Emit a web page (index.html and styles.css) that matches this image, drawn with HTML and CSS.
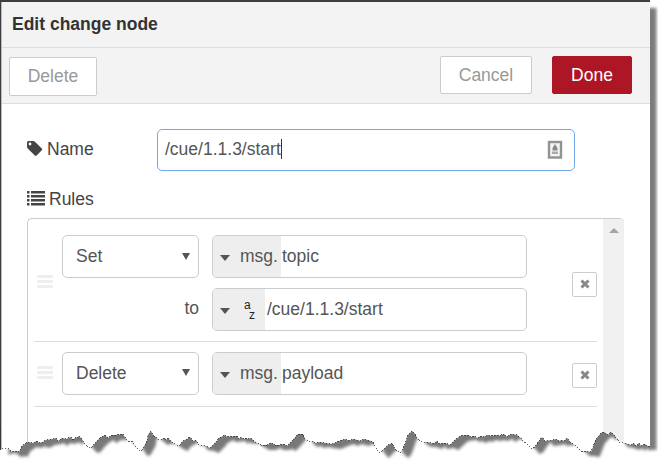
FILE: index.html
```
<!DOCTYPE html>
<html lang="en">
<head>
<meta charset="utf-8">
<title>Edit change node</title>
<link rel="stylesheet" href="styles.css">
</head>
<body>
<main class="sheet">
  <header class="title">Edit change node</header>
  <div class="toolbar">
    <button class="btn btn-delete">Delete</button>
    <button class="btn btn-cancel">Cancel</button>
    <button class="btn btn-done">Done</button>
  </div>
  <div class="form">
    <div class="name-row">
      <div class="label">
        <svg class="tag" width="16" height="16" viewBox="0 0 16 16"><path fill-rule="evenodd" d="M0 1.5Q0 0 1.5 0H6Q7.3 0 8.2 .9L14.8 7.5Q15.6 8.4 14.8 9.3L9.6 14.6Q8.7 15.4 7.8 14.6L1 7.8Q0 6.8 0 5.5ZM3 1.6A1.4 1.4 0 1 0 3 4.4A1.4 1.4 0 1 0 3 1.6Z"/></svg>
        <span>Name</span>
      </div>
      <div class="name-input">
        <span class="caret">/cue/1.1.3/start</span>
        <svg class="autofill" width="16" height="20" viewBox="0 0 16 20"><rect x="2" y="2" width="12" height="15.5" fill="#f4f4f4" stroke="#929292" stroke-width="2.4"/><path d="M8 4L10.5 8V10.500H5.500V8Z" fill="#888"/><path d="M5 11.500H11V14H5Z" fill="#aaa"/></svg>
      </div>
    </div>
    <div class="label rules-label">
      <svg width="18" height="15" viewBox="0 0 18 15"><path d="M0 0h2.500v2.500H0zM4 0h14v2.500H4zM0 4h2.500v2.500H0zM4 4h14v2.500H4zM0 8h2.500v2.500H0zM4 8h14v2.500H4zM0 12h2.500v2.500H0zM4 12h14v2.500H4z"/></svg>
      <span>Rules</span>
    </div>
    <div class="list">
      <div class="rules">
        <div class="rule rule-set">
          <div class="grip"><i></i><i></i><i></i></div>
          <div class="fields">
            <div class="select"><span>Set</span><i class="arrow"></i></div>
            <div class="typed"><div class="type"><i class="drop"></i><span>msg.</span></div><span class="value">topic</span></div>
            <div class="to">to</div>
            <div class="typed"><div class="type type-string"><i class="drop"></i><span class="az"><span>a</span><span>z</span></span></div><span class="value">/cue/1.1.3/start</span></div>
          </div>
          <button class="remove"><svg width="10" height="10" viewBox="0 0 10 10"><path d="M1.500 1.500L8.500 8.500M8.500 1.500L1.500 8.500"/></svg></button>
        </div>
        <div class="rule rule-delete">
          <div class="grip"><i></i><i></i><i></i></div>
          <div class="fields">
            <div class="select"><span>Delete</span><i class="arrow"></i></div>
            <div class="typed"><div class="type"><i class="drop"></i><span>msg.</span></div><span class="value">payload</span></div>
          </div>
          <button class="remove"><svg width="10" height="10" viewBox="0 0 10 10"><path d="M1.500 1.500L8.500 8.500M8.500 1.500L1.500 8.500"/></svg></button>
        </div>
      </div>
      <div class="scrollbar"><i></i></div>
    </div>
  </div>
</main>
<svg class="torn" width="658" height="463" viewBox="0 0 658 463">
  <defs>
    <path id="sheet" d="M650 446V0H0V450L5 448L9 449L12 452L17 451L19 452L22 446L28 442L33 443L37 441L39 443L43 442L46 440L53 439L56 438L58 441L62 438L66 439L71 437L72 439L74 439L76 437L77 438L79 436L82 439L84 443L89 448L92 447L96 442L100 438L105 435L108 438L112 435L117 435L123 434L126 439L128 441L133 442L139 451L142 450L147 441L148 435L151 431L153 435L157 438L159 440L162 439L165 438L166 440L168 438L173 443L179 446L183 441L187 439L190 437L193 441L196 440L199 445L206 446L210 448L213 445L217 441L219 438L225 435L227 437L237 436L239 439L241 437L244 439L246 438L248 439L251 438L254 441L257 443L261 445L267 445L272 443L275 445L280 445L284 444L287 446L293 440L298 434L303 434L305 439L309 442L313 441L315 443L320 442L325 443L332 444L337 442L345 439L349 441L353 439L357 440L361 441L363 439L368 440L373 442L375 447L380 453L384 449L388 445L392 443L395 449L400 453L403 449L406 441L408 435L412 431L415 434L417 438L419 440L423 442L428 442L433 444L437 441L438 444L445 443L450 445L455 440L460 436L468 435L471 437L474 436L477 438L481 436L483 437L488 435L491 436L496 435L499 436L504 434L507 437L511 434L517 435L521 438L524 442L527 444L531 449L535 447L538 442L542 437L545 441L553 440L556 439L559 441L562 440L564 441L567 438L570 442L575 445L581 451L585 451L591 452L593 447L596 439L601 433L604 432L608 435L611 432L615 436L619 442L625 443L628 444L631 445L634 443L636 446L639 443L641 446L645 444L647 446L650 446Z"/>
    <clipPath id="outside"><path clip-rule="evenodd" d="M0 0H658V463H0ZM650 446V0H0V450L5 448L9 449L12 452L17 451L19 452L22 446L28 442L33 443L37 441L39 443L43 442L46 440L53 439L56 438L58 441L62 438L66 439L71 437L72 439L74 439L76 437L77 438L79 436L82 439L84 443L89 448L92 447L96 442L100 438L105 435L108 438L112 435L117 435L123 434L126 439L128 441L133 442L139 451L142 450L147 441L148 435L151 431L153 435L157 438L159 440L162 439L165 438L166 440L168 438L173 443L179 446L183 441L187 439L190 437L193 441L196 440L199 445L206 446L210 448L213 445L217 441L219 438L225 435L227 437L237 436L239 439L241 437L244 439L246 438L248 439L251 438L254 441L257 443L261 445L267 445L272 443L275 445L280 445L284 444L287 446L293 440L298 434L303 434L305 439L309 442L313 441L315 443L320 442L325 443L332 444L337 442L345 439L349 441L353 439L357 440L361 441L363 439L368 440L373 442L375 447L380 453L384 449L388 445L392 443L395 449L400 453L403 449L406 441L408 435L412 431L415 434L417 438L419 440L423 442L428 442L433 444L437 441L438 444L445 443L450 445L455 440L460 436L468 435L471 437L474 436L477 438L481 436L483 437L488 435L491 436L496 435L499 436L504 434L507 437L511 434L517 435L521 438L524 442L527 444L531 449L535 447L538 442L542 437L545 441L553 440L556 439L559 441L562 440L564 441L567 438L570 442L575 445L581 451L585 451L591 452L593 447L596 439L601 433L604 432L608 435L611 432L615 436L619 442L625 443L628 444L631 445L634 443L636 446L639 443L641 446L645 444L647 446L650 446Z"/></clipPath>
    <clipPath id="bottom"><path d="M0 428H649.500V463H0Z"/></clipPath>
    <clipPath id="below"><path d="M0 428H650V463H0Z"/></clipPath>
    <clipPath id="side"><path d="M650 0H658V463H650Z"/></clipPath>
    <filter id="soft" x="-5%" y="-5%" width="110%" height="110%"><feGaussianBlur stdDeviation="1.5"/></filter>
  </defs>
  <g clip-path="url(#outside)">
    <rect width="658" height="463" fill="#fff"/>
    <g clip-path="url(#below)"><g filter="url(#soft)"><use href="#sheet" x="8.500" y="5" fill="#787878"/></g></g>
    <g clip-path="url(#side)"><g filter="url(#soft)"><rect x="20" y="8" width="636.500" height="442" fill="#7c7c7c"/></g></g>
  </g>
  <g clip-path="url(#bottom)"><use href="#sheet" class="edge"/></g>
</svg>
</body>
</html>
```
FILE: styles.css
```
* { box-sizing: border-box; }
body {
  margin: 0;
  width: 658px;
  height: 463px;
  overflow: hidden;
  position: relative;
  background: #fff;
  font-family: "Liberation Sans", Arial, sans-serif;
  font-size: 17.5px;
  color: #555;
}
button { font: inherit; padding: 0; }
.sheet {
  width: 650px;
  height: 463px;
  overflow: hidden;
  border-top: 2px solid #413d3e;
  border-left: 1px solid #413d3e;
  box-shadow: inset 1px 0 #bbb;
}
.title {
  height: 46px;
  line-height: 44px;
  font-weight: bold;
  color: #333;
  background: #f3f3f3;
  border-bottom: 1px solid #ddd;
  margin-left: 1px;
  padding-left: 10px;
}
.toolbar {
  height: 56px;
  margin-left: 1px;
  padding: 8px 18px 0 7px;
  display: flex;
  background: #f3f3f3;
  border-bottom: 1px solid #ddd;
}
.btn {
  height: 38px;
  border: 1px solid #ccc;
  border-radius: 2px;
  background: #fff;
  color: #999;
}
.btn-delete { width: 88px; height: 39px; margin: 1px auto 0 0; }
.btn-cancel { width: 92px; margin-right: 20px; }
.btn-done { width: 80px; border-color: #ad1625; background: #ad1625; color: #fff; }
.form { padding: 25px 26px 0; }
.label { display: flex; align-items: center; color: #444; fill: #444; }
.name-row { display: flex; height: 42px; }
.name-row .label { width: 130px; height: 40px; gap: 4px; }
.name-input {
  width: 418px;
  height: 42px;
  padding: 0 11px 0 7px;
  display: flex;
  align-items: center;
  justify-content: space-between;
  border: 1px solid #73a9ec;
  border-radius: 5px;
}
.caret { border-right: 1px solid #333; line-height: 20px; margin-top: -2px; }
.rules-label { height: 28px; margin-top: 14px; gap: 4px; }
.rules-label svg { margin-top: -2px; }
.list {
  height: 260px;
  width: 597px;
  margin-top: 5px;
  display: flex;
  justify-content: space-between;
  border: 1px solid #ccc;
  border-right: 0;
  border-radius: 5px 5px 0 0;
}
.rules { width: 569px; padding: 0 0 0 6px; }
.rule { display: flex; width: 563px; border-bottom: 1px solid #ddd; }
.rule-set { height: 123px; padding-top: 16px; }
.rule-delete { height: 65px; padding-top: 10px; }
.grip { width: 28px; padding: 40px 0 0 3px; }
.grip i { display: block; width: 16px; height: 3px; margin-bottom: 2px; border-radius: 1px; background: #eee; }
.rule-delete .grip { padding-top: 14px; }
.fields {
  display: grid;
  grid-template-columns: 137px 315px;
  grid-auto-rows: 43px;
  gap: 10px 13px;
  align-content: start;
}
.select, .typed { height: 43px; border: 1px solid #ccc; border-radius: 5px; display: flex; align-items: center; }
.select { padding: 0 8px 0 13px; justify-content: space-between; }
.arrow { border: solid transparent; border-width: 7px 4px 0; border-top-color: #555; margin-top: -1px; }
.rule-delete .select { padding-bottom: 1px; }
.typed { overflow: hidden; }
.type { width: 68px; height: 41px; padding-left: 7px; display: flex; align-items: center; background: #eee; }
.type span { margin-left: 10px; }
.drop { border: solid transparent; border-width: 6px 5.5px 0; border-top-color: #555; margin-top: 2px; }
.value { margin-left: 1px; padding-bottom: 1px; }
.type-string { width: 52px; }
.type-string + .value { margin-left: 2px; }
.type .az { display: grid; grid-template-columns: 5px 6px; margin-left: 14px; font-size: 12px; line-height: 10px; color: #222; }
.type .az span { margin: 0; }
.az span + span { grid-column: 2; grid-row: 2; }
.to { text-align: right; padding-top: 10px; line-height: 21px; }
.remove {
  width: 25px;
  height: 25px;
  margin: 37px 0 0 auto;
  padding-bottom: 2px;
  display: flex;
  align-items: center;
  justify-content: center;
  background: #fff;
  border: 1px solid #ccc;
  border-radius: 2px;
}
.remove path { stroke: #888; stroke-width: 3; }
.rule-delete .remove { margin-top: 11px; }
.scrollbar { width: 21px; padding: 9px 0 0 6px; background: #f0f0f0; }
.scrollbar i { display: block; width: 10px; border: solid transparent; border-width: 0 5px 5px; border-bottom-color: #a3a3a3; }
.torn { position: absolute; left: 0; top: 0; }
.edge { fill: none; stroke: #333; stroke-width: .8; stroke-dasharray: 1.5 1.5; shape-rendering: crispEdges; }
```
